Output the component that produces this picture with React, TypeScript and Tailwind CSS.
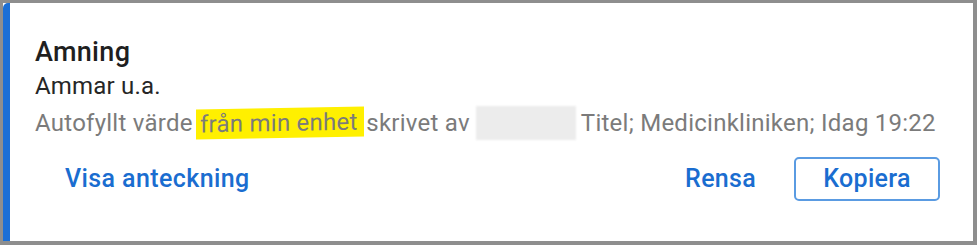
import React from "react";

const App: React.FC = () => {
  return (
    <div className="w-[977px] h-[245px] bg-white font-['Roboto',sans-serif]">
      <div className="h-full border-t-[3px] border-l-[3px] border-r-4 border-b-4 border-[#8e8e8e] bg-white">
        <div className="h-full flex flex-col border-l-[7px] border-[#1b6fd6] rounded-tl-[5px] pl-[25px] pr-[33px] pt-[33px]">
          <h1 className="text-[27px] leading-[32px] font-medium text-[#1f1f1f] tracking-[0.3px]">Amning</h1>
          <p className="mt-[3px] text-[24px] leading-[30px] text-[#262626] tracking-[0.2px]">Ammar u.a.</p>
          <p className="mt-[5px] flex items-center text-[24px] leading-[30px] text-[#7b7b7b] whitespace-nowrap tracking-[0.25px]">
            <span>Autofyllt värde</span>
            <span className="ml-[3px] bg-[#fff000] pl-[4px] pr-[6px] -skew-y-1">från min enhet</span>
            <span className="ml-[3px]">skrivet av</span>
            <span className="ml-[6px] mr-[5px] w-[100px] h-[34px] bg-[#ececec] blur-[1px]"></span>
            <span>Titel; Medicinkliniken; Idag 19:22</span>
          </p>
          <div className="mt-[17px] flex items-center">
            <button className="px-[30px] h-[44px] text-[25px] font-medium text-[#1a6dd0] tracking-[0.4px]">Visa anteckning</button>
            <div className="flex-1"></div>
            <button className="px-[30px] h-[44px] text-[25px] font-medium text-[#1a6dd0] tracking-[0.3px]">Rensa</button>
            <button className="ml-[8px] w-[146px] h-[44px] rounded-[5px] border-2 border-[#5a9be2] text-[25px] font-medium text-[#1a6dd0] tracking-[0.3px]">Kopiera</button>
          </div>
        </div>
      </div>
    </div>
  );
};

export default App;
